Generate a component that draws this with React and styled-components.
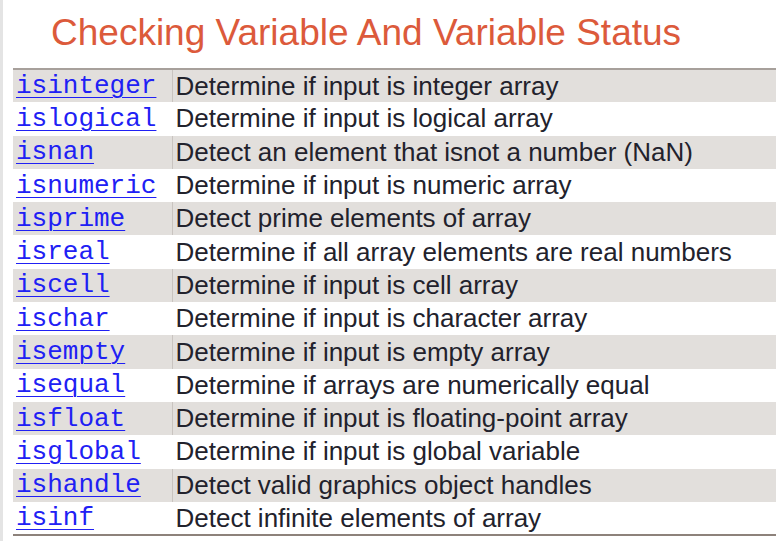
import React from 'react';
import styled, { createGlobalStyle } from 'styled-components';

const GlobalStyle = createGlobalStyle`
  html, body {
    margin: 0;
    padding: 0;
    background: #ffffff;
  }
`

const Page = styled.div`
  box-sizing: border-box;
  min-height: 100vh;
  border-left: 3px solid #e4e4e4;
  padding: 15px 5px 0 10px;
  font-family: "Liberation Sans", Arial, sans-serif;
`

const Title = styled.h1`
  margin: 0 0 17px 38px;
  font-size: 37px;
  font-weight: normal;
  line-height: 36px;
  color: #dc5a3b;
`

const Table = styled.table`
  width: 763px;
  border-collapse: collapse;
  border-top: 2px solid #a7a09b;
  border-bottom: 2px solid #8d827b;
`

const Row = styled.tr`
  background: ${p => (p.$shade ? '#e2dfdc' : '#ffffff')};
`

const NameCell = styled.td`
  box-sizing: border-box;
  height: 33.3px;
  width: 159px;
  padding: 0 0 0 3px;
  border-right: 1px solid ${p => (p.$shade ? '#c9c4c0' : '#ffffff')};
  vertical-align: middle;
`

const Link = styled.a`
  font-family: "Liberation Mono", "Courier New", monospace;
  font-size: 26px;
  color: #2020f4;
  text-decoration: underline;
  text-decoration-thickness: 1px;
  text-underline-offset: 4px;
  cursor: pointer;
`

const DescCell = styled.td`
  padding: 0 0 0 3px;
  font-size: 26px;
  color: #22222c;
  white-space: nowrap;
  vertical-align: middle;
`

const funcs = [
  ['isinteger', 'Determine if input is integer array'],
  ['islogical', 'Determine if input is logical array'],
  ['isnan', 'Detect an element that isnot a number (NaN)'],
  ['isnumeric', 'Determine if input is numeric array'],
  ['isprime', 'Detect prime elements of array'],
  ['isreal', 'Determine if all array elements are real numbers'],
  ['iscell', 'Determine if input is cell array'],
  ['ischar', 'Determine if input is character array'],
  ['isempty', 'Determine if input is empty array'],
  ['isequal', 'Determine if arrays are numerically equal'],
  ['isfloat', 'Determine if input is floating-point array'],
  ['isglobal', 'Determine if input is global variable'],
  ['ishandle', 'Detect valid graphics object handles'],
  ['isinf', 'Detect infinite elements of array'],
]

export default function App() {
  return (
    <>
      <GlobalStyle />
      <Page>
        <Title>Checking Variable And Variable Status</Title>
        <Table>
          <tbody>
            {funcs.map(([name, desc], i) => (
              <Row key={name} $shade={i % 2 === 0}>
                <NameCell $shade={i % 2 === 0}>
                  <Link>{name}</Link>
                </NameCell>
                <DescCell>{desc}</DescCell>
              </Row>
            ))}
          </tbody>
        </Table>
      </Page>
    </>
  )
}
